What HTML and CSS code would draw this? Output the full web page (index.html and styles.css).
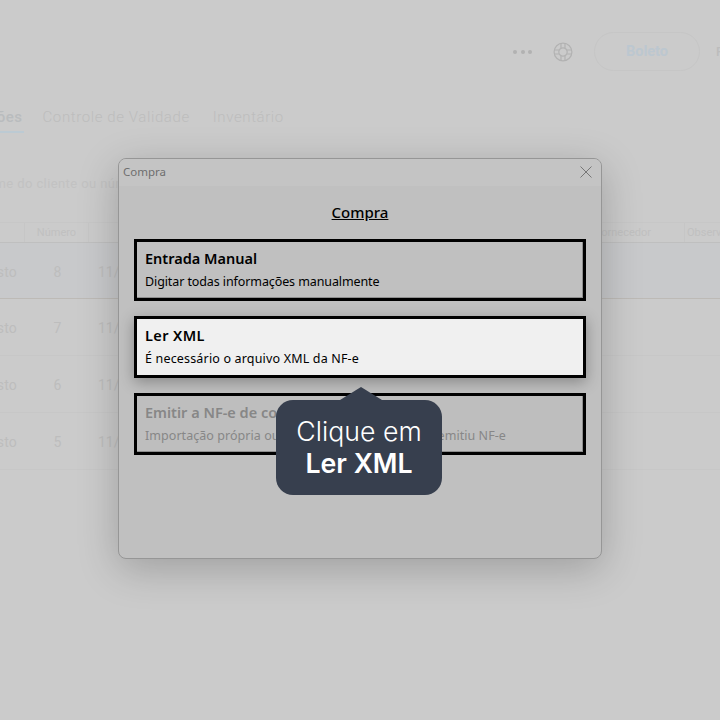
FILE: index.html
```html
<!DOCTYPE html>
<html lang="pt-BR">
<head>
<meta charset="utf-8">
<title>Compra</title>
<link rel="stylesheet" href="styles.css">
</head>
<body>
<div class="app">
  <header class="topbar">
    <div class="dots"><i></i><i></i><i></i></div>
    <svg class="help" width="20" height="20" viewBox="0 0 20 20" fill="none" stroke="#b2b2b2" stroke-width="1.2">
      <circle cx="10" cy="10" r="8.9"/>
      <circle cx="10" cy="10" r="4.2"/>
      <path d="M8 1.3v4.6M12 1.3v4.6M8 14.1v4.6M12 14.1v4.6M1.3 8h4.6M1.3 12h4.6M14.1 8h4.6M14.1 12h4.6"/>
    </svg>
    <button class="boleto">Boleto</button>
    <span class="cut">Pedido</span>
  </header>
  <nav class="tabs">
    <span class="tab active">Operações</span>
    <span class="tab">Controle de Validade</span>
    <span class="tab">Inventário</span>
  </nav>
  <div class="search">Nome do cliente ou número</div>
  <div class="table">
    <div class="row head">
      <span class="cell-sep"></span>
      <span class="col-num">Número</span>
      <span class="col-date"></span>
      <span class="col-sup">Fornecedor</span>
      <span class="col-obs">Observação</span>
    </div>
    <div class="row selected"><span class="col-type"><b>Imposto</b></span><span class="col-num">8</span><span class="col-date">11/12</span></div>
    <div class="row"><span class="col-type"><b>Imposto</b></span><span class="col-num">7</span><span class="col-date">11/12</span></div>
    <div class="row"><span class="col-type"><b>Imposto</b></span><span class="col-num">6</span><span class="col-date">11/12</span></div>
    <div class="row"><span class="col-type"><b>Imposto</b></span><span class="col-num">5</span><span class="col-date">11/12</span></div>
  </div>
</div>

<section class="modal">
  <div class="titlebar">
    <span>Compra</span>
    <svg width="12" height="12" viewBox="0 0 12 12" stroke="#767676" stroke-width="1" fill="none"><path d="M.5.5l11 11M11.5.5l-11 11"/></svg>
  </div>
  <div class="content">
    <h1>Compra</h1>
    <div class="option manual">
      <strong>Entrada Manual</strong>
      <span>Digitar todas informações manualmente</span>
    </div>
    <div class="option focus">
      <strong>Ler XML</strong>
      <span>É necessário o arquivo XML da NF-e</span>
    </div>
    <div class="option disabled">
      <strong>Emitir a NF-e de compra</strong>
      <span>Importação própria ou quando o fornecedor não emitiu NF-e</span>
    </div>
  </div>
</section>

<div class="tip">
  <span class="tip-arrow"></span>
  <span>Clique em</span>
  <strong>Ler XML</strong>
</div>
</body>
</html>
```

FILE: styles.css
```css
* { box-sizing: border-box; }
html, body { margin: 0; height: 100%; }
body {
  width: 720px;
  height: 720px;
  overflow: hidden;
  position: relative;
  background: #cbcbcb;
  font-family: "Roboto", sans-serif;
  color: #bdbdbd;
}
.app { display: flex; flex-direction: column; height: 100%; overflow: hidden; }

.topbar {
  display: flex;
  align-items: center;
  height: 39px;
  margin-top: 32px;
  padding-left: 513px;
  white-space: nowrap;
}
.dots { display: flex; flex: none; gap: 3.5px; width: 40px; }
.dots i { width: 4px; height: 4px; border-radius: 50%; background: #b2b2b2; }
.help { flex: none; }
.boleto {
  flex: none;
  width: 106px;
  height: 39px;
  margin-left: 21px;
  border: 1px solid #c6c6c6;
  border-radius: 20px;
  background: transparent;
  color: #bcc7d0;
  font: 700 14.5px "Roboto", sans-serif;
  padding: 0;
}
.cut { margin-left: 16px; font: 500 13px "Roboto", sans-serif; color: #bcbcbc; }

.tabs {
  display: flex;
  gap: 23px;
  margin: 36px 0 0 -55px;
  font-size: 15px;
  font-weight: 300;
  letter-spacing: .6px;
  white-space: nowrap;
}
.tab { height: 26px; line-height: 20px; }
.tab.active { margin-right: -4px; color: #b9bcbe; border-bottom: 2px solid #bccad3; font-weight: 500; letter-spacing: .5px; padding: 0 1px; }

.search {
  margin: 40px 0 0 -23px;
  height: 22px;
  line-height: 22px;
  font-size: 13px;
  letter-spacing: .4px;
  color: #c2c2c2;
  white-space: nowrap;
}

.table { margin-top: 27px; font-size: 12px; }
.row {
  display: grid;
  grid-template-columns: 17px 81px 90px 1fr;
  align-items: center;
  height: 57px;
  padding-top: 2px;
  font-size: 14px;
  border-bottom: 1px solid #c7c7c7;
}
.row.head {
  grid-template-columns: 25px 64px 1fr 98px 36px;
  height: 21px;
  padding-top: 0;
  font-size: 11px;
  color: #c0c0c0;
  border-top: 1px solid #c7c7c7;
  border-bottom: 1px solid #bfbfbf;
  white-space: nowrap;
}
.row.selected { height: 56px; background: #c8c9cb; border-bottom-color: #bdbab6; }
.cell-sep { height: 100%; border-right: 1px solid #c6c6c6; }
.col-type { display: flex; justify-content: flex-end; }
.col-type b { font-weight: 400; letter-spacing: .2px; }
.col-num { text-align: center; }
.row.head .col-num { border-right: 1px solid #c6c6c6; height: 100%; line-height: 19px; }
.col-sup { text-align: right; padding-right: 33px; line-height: 19px; }
.col-obs { border-left: 1px solid #c6c6c6; height: 100%; line-height: 19px; padding-left: 2px; overflow: hidden; }

.modal {
  position: absolute;
  left: 118px;
  top: 158px;
  width: 484px;
  height: 401px;
  display: flex;
  flex-direction: column;
  border: 1px solid #969696;
  border-radius: 8px;
  background: #c0c0c0;
  box-shadow: 0 10px 40px rgba(0, 0, 0, .22);
  font-family: "Noto Sans", sans-serif;
  color: #000;
  overflow: hidden;
}
.titlebar {
  display: flex;
  align-items: center;
  justify-content: space-between;
  flex: none;
  height: 27px;
  padding: 0 9px 2px 4px;
  background: #c4c4c4;
  font-size: 11.5px;
  color: #6e6e6e;
}
.content {
  display: flex;
  flex-direction: column;
  gap: 15px;
  padding: 0 15px;
}
h1 {
  margin: 15px 0 1px;
  height: 22px;
  line-height: 22px;
  text-align: center;
  font-size: 15px;
  font-weight: 500;
  text-decoration: underline;
}
.option {
  display: flex;
  flex-direction: column;
  justify-content: center;
  gap: 5px;
  height: 62px;
  padding: 0 0 2px 8px;
  border: 3px solid #000;
  box-shadow: inset -1px -1px 0 #8e8e8e;
}
.option strong { font-size: 14.5px; line-height: 20px; font-weight: 600; }
.option span { font-size: 12.5px; line-height: 17px; }
.option.manual span { letter-spacing: -.1px; }
.option.focus {
  background: #f0f0f0;
  box-shadow: 0 4px 14px rgba(0, 0, 0, .3);
}
.option.focus strong { letter-spacing: .4px; }
.option.focus span { letter-spacing: .17px; }
.option.disabled { background: #bebebe; color: #878787; }
.option.disabled span { letter-spacing: .05px; }

.tip {
  position: absolute;
  left: 276px;
  top: 400px;
  width: 166px;
  height: 95px;
  display: flex;
  flex-direction: column;
  align-items: center;
  justify-content: center;
  padding-bottom: 2px;
  border-radius: 17px;
  background: #373f4e;
  color: #fff;
  font-family: "Inter", sans-serif;
  font-size: 26.7px;
  line-height: 32px;
  font-weight: 300;
}
.tip strong { font-weight: 600; }
.tip-arrow {
  position: absolute;
  left: 64px;
  top: -13px;
  width: 0;
  height: 0;
  border-left: 21px solid transparent;
  border-right: 21px solid transparent;
  border-bottom: 13px solid #373f4e;
}
```
